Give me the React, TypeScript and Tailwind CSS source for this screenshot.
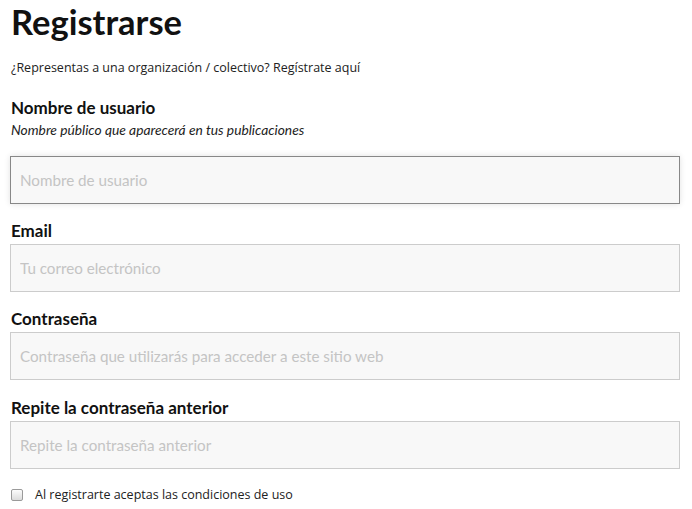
import React from "react";

const fields = [
  { label: "Email", placeholder: "Tu correo electrónico", mt: "mt-[16px]" },
  { label: "Contraseña", placeholder: "Contraseña que utilizarás para acceder a este sitio web", mt: "mt-[16px]" },
  { label: "Repite la contraseña anterior", placeholder: "Repite la contraseña anterior", mt: "mt-[17px]" },
];

export default function App() {
  return (
    <div className="w-[692px] h-[509px] overflow-hidden bg-white px-[10px] text-[#111]" style={{ fontFamily: "Lato, 'Noto Sans', sans-serif" }}>
      <h1 className="pt-[2px] pl-[1px] text-[34.5px] leading-[40px] font-bold text-[#111]">Registrarse</h1>
      <p className="mt-[17px] pl-[1px] text-[12.5px] leading-[18px] text-[#222]" style={{ fontFamily: "'Open Sans', sans-serif" }}>
        ¿Representas a una organización / colectivo? Regístrate aquí
      </p>
      <div className="mt-[20px]">
        <div className="pl-[1px] text-[17px] leading-[22px] font-bold">Nombre de usuario</div>
        <div className="pl-[1px] text-[13.8px] leading-[22px] italic text-[#222]">Nombre público que aparecerá en tus publicaciones</div>
        <input
          className="mt-[15px] block w-[670px] h-[48px] border border-[#888] bg-[#f8f8f8] px-[9px] text-[15.2px] outline-none placeholder:text-[#c4c4c4] shadow-[0_0_6px_rgba(0,0,0,0.12)]"
          placeholder="Nombre de usuario"
        />
      </div>
      {fields.map((f, i) => (
        <div key={i} className={f.mt}>
          <div className="pl-[1px] text-[17px] leading-[22px] font-bold">{f.label}</div>
          <input
            className="mt-[2px] block w-[670px] h-[48px] border border-[#cccccc] bg-[#f8f8f8] px-[9px] text-[15.2px] outline-none placeholder:text-[#c4c4c4]"
            placeholder={f.placeholder}
          />
        </div>
      ))}
      <label className="mt-[17px] flex items-center pl-[1px]" style={{ fontFamily: "'Open Sans', sans-serif" }}>
        <span className="w-[12px] h-[12px] rounded-[2px] border border-[#9a9a9a] bg-gradient-to-b from-[#fcfcfc] to-[#dcdcdc]"></span>
        <span className="ml-[12px] text-[12.5px] leading-[18px] text-[#222]">Al registrarte aceptas las condiciones de uso</span>
      </label>
    </div>
  );
}
